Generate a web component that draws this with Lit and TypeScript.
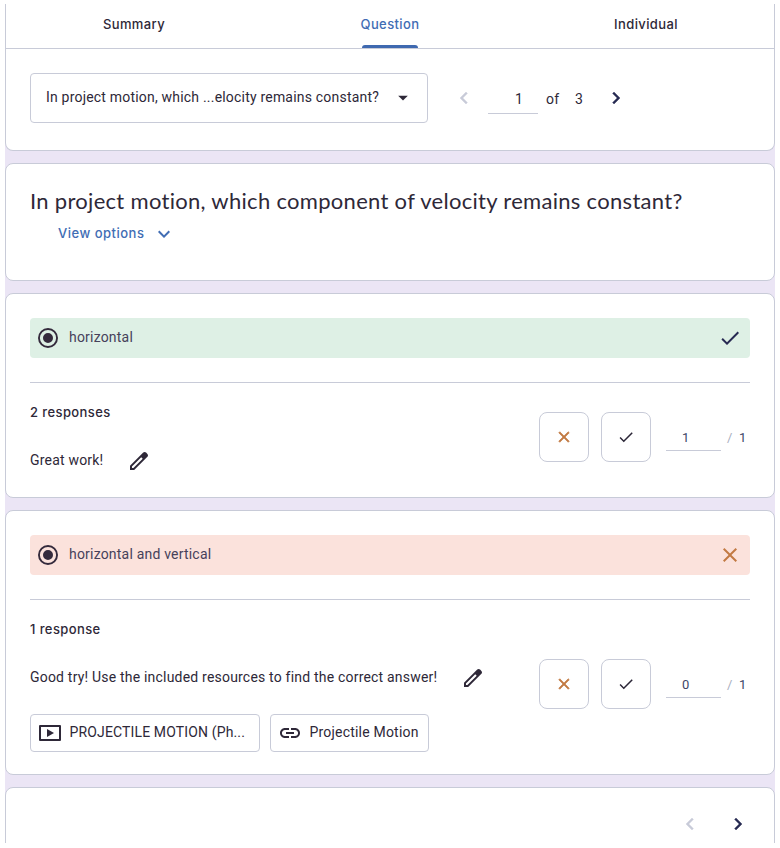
import { LitElement, html, css, svg } from "lit";
import { customElement, property } from "lit/decorators.js";

const icons: Record<string, unknown> = {
  prev: svg`<path d="M15.41 7.41L14 6l-6 6 6 6 1.41-1.41L10.83 12z"/>`,
  next: svg`<path d="M8.59 16.59L13.17 12 8.59 7.41 10 6l6 6-6 6z"/>`,
  more: svg`<path d="M16.59 8.59L12 13.17 7.41 8.59 6 10l6 6 6-6z"/>`,
  caret: svg`<path d="M7.2 9.7h9.6L12 14.6z"/>`,
  check: svg`<path d="M9 16.17L4.83 12l-1.42 1.41L9 19 21 7l-1.41-1.41z"/>`,
  close: svg`<path d="M19 6.41L17.59 5 12 10.59 6.41 5 5 6.41 10.59 12 5 17.59 6.41 19 12 13.41 17.59 19 19 17.59 13.41 12z"/>`,
  edit: svg`<path fill-rule="evenodd" d="M20.41 4.94l-1.35-1.35c-.78-.78-2.05-.78-2.83 0L3 16.82V21h4.18L20.41 7.77c.79-.78.79-2.05 0-2.83zM6.41 19.06L5 19l-.06-1.41L14.23 8.3l1.47 1.47z"/>`,
  radio: svg`<path d="M12 7a5 5 0 1 0 0 10 5 5 0 0 0 0-10zm0-5a10 10 0 1 0 0 20 10 10 0 0 0 0-20zm0 18.1a8.1 8.1 0 1 1 0-16.2 8.1 8.1 0 0 1 0 16.2z"/>`,
  video: svg`<path fill-rule="evenodd" d="M2 4h20a1 1 0 0 1 1 1v14a1 1 0 0 1-1 1H2a1 1 0 0 1-1-1V5a1 1 0 0 1 1-1zm1 2v12h18V6zM9 8l7 4-7 4z"/>`,
  link: svg`<path d="M3.9 12c0-1.71 1.39-3.1 3.1-3.1h4V7H7c-2.76 0-5 2.24-5 5s2.24 5 5 5h4v-1.9H7c-1.71 0-3.1-1.39-3.1-3.1zM8 13h8v-2H8v2zm9-6h-4v1.9h4c1.71 0 3.1 1.39 3.1 3.1s-1.39 3.1-3.1 3.1h-4V17h4c2.76 0 5-2.24 5-5s-2.24-5-5-5z"/>`,
};

@customElement("ui-icon")
class UiIcon extends LitElement {
  @property() name = "";
  static styles = css`
    :host { display: block; flex: none; width: 24px; height: 24px; }
    svg { display: block; width: 100%; height: 100%; fill: currentColor; stroke: currentColor; stroke-width: var(--icon-stroke, 0); }
  `;
  render() {
    return html`<svg viewBox="0 0 24 24">${icons[this.name]}</svg>`;
  }
}

@customElement("grade-controls")
class GradeControls extends LitElement {
  @property() score = "0";
  @property() total = "1";
  static styles = css`
    :host { display: flex; height: 50px; width: 211px; font: 13px/20px Roboto, sans-serif; color: #3d4668; }
    .btn { box-sizing: border-box; width: 50px; height: 50px; margin-right: 12px; border: 1px solid #c8cbd8; border-radius: 8px; display: flex; align-items: center; justify-content: center; }
    .wrong { color: #c27a43; --icon-stroke: 0.9; }
    .right { color: #2b2637; }
    .wrong ui-icon { width: 18px; height: 18px; }
    .right ui-icon { width: 18px; height: 18px; }
    .score { box-sizing: border-box; width: 55px; height: 39px; margin-left: 3px; padding: 16px 0 0 16px; border-bottom: 1px solid #c8cbd8; }
    .slash { margin: 16px 0 0 6px; width: 12px; color: #a9aec0; }
    .total { margin-top: 16px; }
  `;
  render() {
    return html`
      <div class="btn wrong"><ui-icon name="close"></ui-icon></div>
      <div class="btn right"><ui-icon name="check"></ui-icon></div>
      <div class="score">${this.score}</div>
      <div class="slash">/</div>
      <div class="total">${this.total}</div>
    `;
  }
}

@customElement("app-root")
class AppRoot extends LitElement {
  static styles = css`
    :host { display: block; box-sizing: border-box; width: 780px; height: 848px; padding: 4px 5px 5px; background: #fff; color: #2e2838; font: 14px/20px Roboto, sans-serif; letter-spacing: 0.2px; }
    .page { display: flex; flex-direction: column; gap: 12px; height: 839px; overflow: hidden; background: #ebe5f5; }
    .card { box-sizing: border-box; flex: none; border: 1px solid #c8cbd8; border-radius: 8px; background: #fff; padding: 24px 24px 0; }
    .head { height: 147px; border-top: 0; border-radius: 0 0 8px 8px; padding: 0; }
    .tabs { display: grid; grid-template-columns: repeat(3, 1fr); height: 44px; border-bottom: 1px solid #c8cbd8; font: 500 13px/20px Inter, sans-serif; letter-spacing: 0.4px; }
    .tab { display: flex; flex-direction: column; align-items: center; padding: 10px 0 0 0; justify-content: space-between; }
    .active { color: #416db4; }
    .bar { width: 56px; height: 3px; border-radius: 3px 3px 0 0; background: #3f69b0; }
    .picker { display: flex; padding: 24px 24px 0; }
    .select { box-sizing: border-box; width: 398px; height: 50px; border: 1px solid #c8cbd8; border-radius: 4px; padding: 0 12px 2px 15px; display: flex; align-items: center; justify-content: space-between; }
    .select ui-icon { margin-top: 2px; }
    .off { color: #c8cbd8; --icon-stroke: 0.4; }
    .on { color: #272a52; --icon-stroke: 0.4; }
    .picker .off { margin: 13px 12px 0 24px; }
    .picker .on { margin: 13px 0 0 20px; }
    .field { box-sizing: border-box; width: 50px; height: 41px; border-bottom: 1px solid #c8cbd8; padding: 16px 0 0 27px; }
    .of { margin: 16px 0 0 8px; width: 29px; }
    .count { margin-top: 16px; width: 9px; }
    .question { height: 118px; }
    .title { margin-top: -1px; font: 400 22px/28px Lato, sans-serif; letter-spacing: 0.3px; white-space: nowrap; }
    .view { display: flex; align-items: center; gap: 8px; margin: 5px 0 0 28px; color: #416db4; font: 500 13px/24px Inter, sans-serif; letter-spacing: 0.5px; }
    .view ui-icon { margin-top: 2px; }
    .option { display: flex; align-items: center; height: 40px; border-radius: 4px; padding: 0 8px 0 6px; color: #46415a; }
    .option > span { flex: 1; margin: -2px 0 0 9px; }
    .option > ui-icon:first-child { color: #342a3c; }
    .good { background: #def0e5; }
    .good .mark { color: #272a52; }
    .bad { background: #fbe2dc; }
    .bad .mark { color: #c27a43; }
    .rule { height: 1px; margin-top: 24px; background: #c8cbd8; }
    .row { display: flex; justify-content: space-between; }
    .responses { margin-top: 19px; font: 500 13px/20px Inter, sans-serif; letter-spacing: 0.4px; }
    .feedback { display: flex; align-items: center; gap: 24px; margin-top: 27px; height: 24px; }
    .feedback span { margin-top: -2px; }
    .first { height: 205px; }
    .second { height: 265px; }
    .first grade-controls { margin-top: 29px; }
    .second grade-controls { margin-top: 59px; }
    .chips { display: flex; gap: 10px; margin-top: 24px; }
    .chip { box-sizing: border-box; height: 38px; border: 1px solid #c8cbd8; border-radius: 4px; display: flex; align-items: center; gap: 7.5px; padding: 0 7px; white-space: nowrap; letter-spacing: 0.14px; }
    .chip span { margin-top: -2px; }
    .clip { width: 230px; }
    .url { width: 159px; letter-spacing: 0.2px; }
    .foot { height: 64px; display: flex; justify-content: flex-end; gap: 24px; padding-right: 24px; }
  `;
  render() {
    return html`
      <main class="page">
        <section class="card head">
          <nav class="tabs">
            <div class="tab">Summary</div>
            <div class="tab active">Question<div class="bar"></div></div>
            <div class="tab">Individual</div>
          </nav>
          <div class="picker">
            <div class="select"><span>In project motion, which ...elocity remains constant?</span><ui-icon name="caret"></ui-icon></div>
            <ui-icon class="off" name="prev"></ui-icon>
            <div class="field">1</div>
            <div class="of">of</div>
            <div class="count">3</div>
            <ui-icon class="on" name="next"></ui-icon>
          </div>
        </section>
        <section class="card question">
          <div class="title">In project motion, which component of velocity remains constant?</div>
          <div class="view"><span>View options</span><ui-icon name="more"></ui-icon></div>
        </section>
        <section class="card first">
          <div class="option good"><ui-icon name="radio"></ui-icon><span>horizontal</span><ui-icon class="mark" name="check"></ui-icon></div>
          <div class="rule"></div>
          <div class="row">
            <div>
              <div class="responses">2 responses</div>
              <div class="feedback"><span>Great work!</span><ui-icon name="edit"></ui-icon></div>
            </div>
            <grade-controls score="1"></grade-controls>
          </div>
        </section>
        <section class="card second">
          <div class="option bad"><ui-icon name="radio"></ui-icon><span>horizontal and vertical</span><ui-icon class="mark" name="close"></ui-icon></div>
          <div class="rule"></div>
          <div class="row">
            <div>
              <div class="responses">1 response</div>
              <div class="feedback"><span>Good try! Use the included resources to find the correct answer!</span><ui-icon name="edit"></ui-icon></div>
              <div class="chips">
                <div class="chip clip"><ui-icon name="video"></ui-icon><span>PROJECTILE MOTION (Ph...</span></div>
                <div class="chip url"><ui-icon name="link"></ui-icon><span>Projectile Motion</span></div>
              </div>
            </div>
            <grade-controls score="0"></grade-controls>
          </div>
        </section>
        <section class="card foot">
          <ui-icon class="off" name="prev"></ui-icon>
          <ui-icon class="on" name="next"></ui-icon>
        </section>
      </main>
    `;
  }
}
